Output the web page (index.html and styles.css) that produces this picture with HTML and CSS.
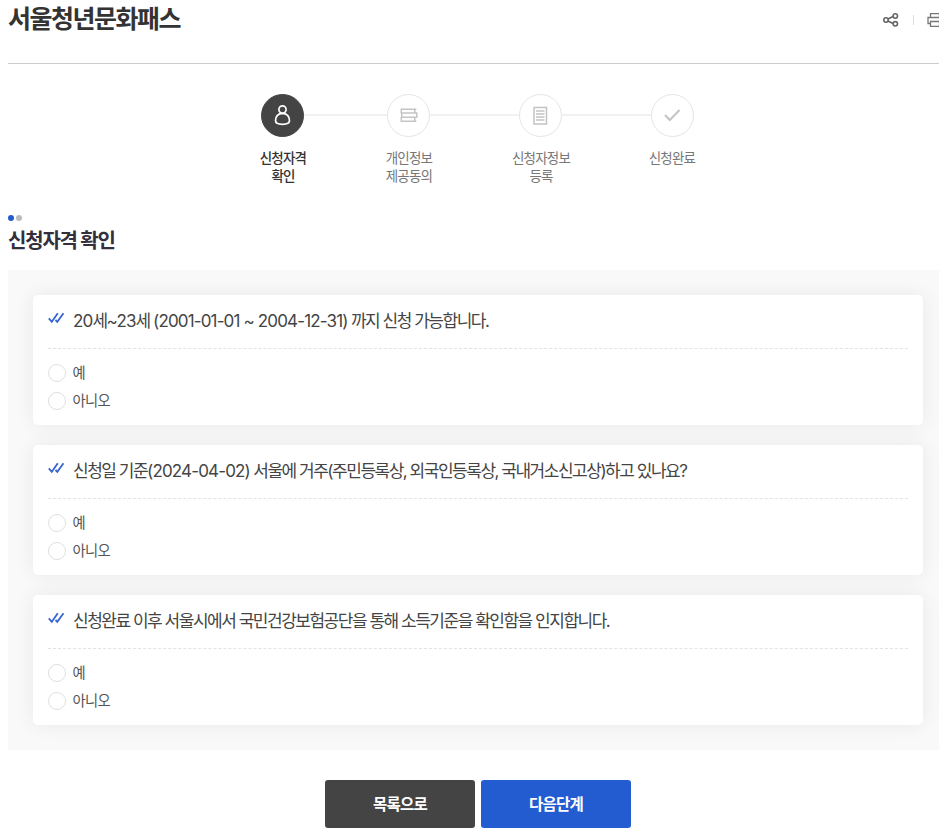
FILE: index.html
```html
<!DOCTYPE html>
<html lang="ko">
<head>
<meta charset="utf-8">
<title>서울청년문화패스</title>
<link rel="stylesheet" href="styles.css">
</head>
<body>
<main class="page">
  <header class="top">
    <h1 class="title"><span>서울청년문화패스</span></h1>
    <div class="tools">
      <svg class="share" width="16" height="14" viewBox="0 0 16 14"><path d="M5 6 10 3.500M5 8l5 2.500"/><circle cx="3" cy="7" r="2.200"/><circle cx="12.300" cy="3" r="2.200"/><circle cx="12.300" cy="10.800" r="2.200"/></svg>
      <i class="bar"></i>
      <svg class="print" width="16" height="14" viewBox="0 0 16 14"><path d="M3.500 4V.500h9V4M3.500 10.500h-2.500v-6h14v6h-2.500M3.500 8.500h9v5h-9z"/></svg>
    </div>
  </header>
  <ol class="steps">
    <li class="step on"><div class="circle"><svg width="21" height="24" viewBox="0 0 21 24"><circle cx="10.500" cy="5.500" r="3.600"/><path d="M10.500 9.300c-4.300 0-7 3.200-7 7.200 0 2.800 2 3.800 7 3.800s7-1 7-3.800c0-4-2.700-7.200-7-7.200z"/></svg></div><p class="label">신청자격<br>확인</p></li>
    <li class="step"><div class="circle"><svg width="20" height="20" viewBox="0 0 20 20"><path d="M1.700 3.200h15.600M1.700 7h16.800M1.700 11.200h16.800M1.700 15.300h15.600M2.300 2.500v5.200M2.700 7v4.500M2.300 11v5M15.800 3.200V7M17.800 7v4.200M15.800 11.200v4.100"/></svg></div><p class="label">개인정보<br>제공동의</p></li>
    <li class="step"><div class="circle"><svg width="20" height="20" viewBox="0 0 20 20"><path d="M3 1.500h12.500v16.500H3zM5 5h8.500M5 8h8.500M5 11h8.500M5 14h8.500"/></svg></div><p class="label">신청자정보<br>등록</p></li>
    <li class="step"><div class="circle"><svg class="check" width="20" height="20" viewBox="0 0 20 20"><path d="m2 9 4.800 5 9.700-10"/></svg></div><p class="label">신청완료</p></li>
  </ol>
  <div class="dots"><i></i><i></i></div>
  <h2 class="heading"><span>신청자격 확인</span></h2>
  <form class="panel">
    <section class="card">
      <h3 class="question"><svg width="17" height="12" viewBox="0 0 17 12"><path d="m.800 6.300 3 3.500L9.800 1.200M7.500 8l1.800 1.800L15.500 1.200"/></svg><span><span class="num">20</span>세<span class="num">~23</span>세 <span class="num">(2001-01-01 ~ 2004-12-31)</span> 까지 신청 가능합니다.</span></h3>
      <label class="option"><input type="radio" name="q1"><span>예</span></label>
      <label class="option"><input type="radio" name="q1"><span>아니오</span></label>
    </section>
    <section class="card">
      <h3 class="question"><svg width="17" height="12" viewBox="0 0 17 12"><path d="m.800 6.300 3 3.500L9.800 1.200M7.500 8l1.800 1.800L15.500 1.200"/></svg><span>신청일 기준<span class="num">(2024-04-02)</span> 서울에 거주(주민등록상, 외국인등록상, 국내거소신고상)하고 있나요?</span></h3>
      <label class="option"><input type="radio" name="q2"><span>예</span></label>
      <label class="option"><input type="radio" name="q2"><span>아니오</span></label>
    </section>
    <section class="card">
      <h3 class="question"><svg width="17" height="12" viewBox="0 0 17 12"><path d="m.800 6.300 3 3.500L9.800 1.200M7.500 8l1.800 1.800L15.500 1.200"/></svg><span>신청완료 이후 서울시에서 국민건강보험공단을 통해 소득기준을 확인함을 인지합니다.</span></h3>
      <label class="option"><input type="radio" name="q3"><span>예</span></label>
      <label class="option"><input type="radio" name="q3"><span>아니오</span></label>
    </section>
  </form>
  <div class="actions"><button class="btn" type="button">목록으로</button><button class="btn next" type="button">다음단계</button></div>
</main>
</body>
</html>
```
FILE: styles.css
```css
* { box-sizing: border-box; }
html { overflow: hidden; }
body { margin: 0; width: 100%; overflow: hidden; background: #fff; color: #333; font-family: Inter, "Noto Sans CJK KR", sans-serif; }
h1, h2, h3, p, ol { margin: 0; padding: 0; }
svg { fill: none; flex: none; }
.page { width: 940px; margin-left: 8px; }
.top { display: flex; justify-content: space-between; height: 64px; border-bottom: 1px solid #ccc; }
.title { font-size: 25px; font-weight: 700; line-height: 38px; letter-spacing: -1.500px; color: #333; }
.tools { display: flex; align-items: center; height: 40px; margin-right: 5px; stroke: #666; stroke-width: 1.600; }
.bar { width: 1px; height: 10px; margin: 0 13px 0 14px; background: #ddd; }
.print { stroke: #777; stroke-width: 1.300; }
.steps { display: flex; padding: 30px 0 0 214.500px; height: 150px; list-style: none; }
.step { width: 132px; text-align: center; background: linear-gradient(#f1f1f1, #f1f1f1) 0 20px / 100% 2px no-repeat; }
.step:first-child { width: 120px; background-position: 60px 20px; }
.step:last-child { background-size: 50% 2px; }
.circle { display: flex; align-items: center; justify-content: center; width: 43px; height: 43px; margin: 0 auto; border: 1px solid #e5e5e5; border-radius: 50%; background: #fff; stroke: #c4c4c4; stroke-width: 1.500; }
.on .circle { border-color: #444; background: #444; stroke: #fff; stroke-width: 1.700; }
.check { stroke-width: 2; }
.label { margin: 12px -1px 0 0; font-size: 13.500px; line-height: 18px; letter-spacing: -.800px; color: #777; }
.step:last-child .label { margin-right: 1px; }
.on .label { color: #333; font-weight: 500; }
.dots { display: flex; gap: 2px; margin-top: 1px; }
.dots i { width: 6px; height: 6px; border-radius: 50%; background: #235bd0; }
.dots i + i { background: #bbb; }
.heading { margin-top: 5px; font-size: 20px; line-height: 30px; letter-spacing: -1.200px; font-weight: 700; color: #332f3d; }
.panel { display: flex; flex-direction: column; gap: 20px; height: 480px; margin-top: 14px; padding: 25px; background: #f9f9f9; }
.card { height: 130px; padding: 0 15px; border-radius: 5px; background: #fff; box-shadow: 0 0 20px rgba(0,0,0,.07); }
.question { display: flex; height: 54px; margin-bottom: 9px; padding-top: 12px; border-bottom: 1px dashed #e3e3e3; font-size: 17px; line-height: 28px; font-weight: 400; letter-spacing: -1.480px; color: #444; white-space: nowrap; }
.num { letter-spacing: -.850px; }
.question svg { margin: 5px 8px 0 0; stroke: #3665d2; stroke-width: 1.800; }
.option { display: flex; align-items: center; height: 28px; font-size: 14.300px; color: #555; letter-spacing: -.600px; }
.option span { padding-bottom: 2px; }
.option input { appearance: none; width: 18px; height: 18px; margin: 2px 6.500px 0 0; border: 1px solid #e0e0e0; border-radius: 50%; background: #fff; }
.actions { display: flex; justify-content: center; gap: 6px; margin-top: 30px; }
.btn { width: 150px; height: 48px; padding: 0 0 2px; border: 0; border-radius: 3px; background: #444; color: #fff; font: 700 15.500px Inter, "Noto Sans CJK KR", sans-serif; letter-spacing: -.800px; }
.next { background: #235bd0; }
```
